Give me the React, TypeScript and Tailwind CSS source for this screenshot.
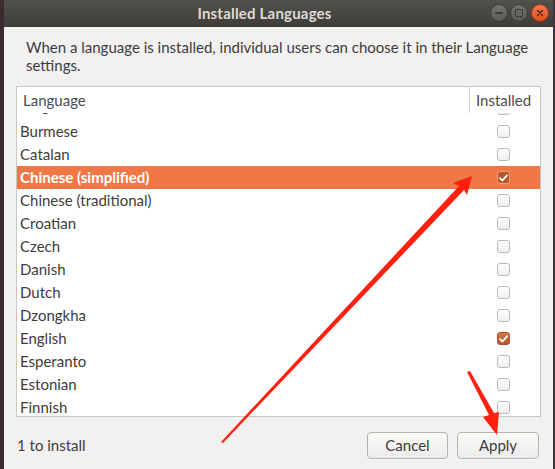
import React from "react";

const rows: { name: string; checked?: boolean; selected?: boolean }[] = [
  { name: "Bulgarian" },
  { name: "Burmese" },
  { name: "Catalan" },
  { name: "Chinese (simplified)", checked: true, selected: true },
  { name: "Chinese (traditional)" },
  { name: "Croatian" },
  { name: "Czech" },
  { name: "Danish" },
  { name: "Dutch" },
  { name: "Dzongkha" },
  { name: "English", checked: true },
  { name: "Esperanto" },
  { name: "Estonian" },
  { name: "Finnish" },
];

function Check({ checked, selected }: { checked?: boolean; selected?: boolean }) {
  if (checked) {
    return (
      <div
        className={
          "w-[13px] h-[13px] rounded-[3px] flex items-center justify-center border " +
          (selected
            ? "bg-[#b9552b] border-[#e9a081]"
            : "bg-gradient-to-b from-[#d7774c] to-[#b8552c] border-[#a9522d]")
        }
      >
        <svg width="9" height="8" viewBox="0 0 9 8">
          <path d="M1 4.2 L3.4 6.5 L8 1.3" fill="none" stroke="#ffffff" strokeWidth="1.8" strokeLinecap="round" strokeLinejoin="round" />
        </svg>
      </div>
    );
  }
  return <div className="w-[13px] h-[13px] rounded-[3px] border border-[#bcbab6] bg-gradient-to-b from-[#ffffff] to-[#f0efed]" />;
}

export default function App() {
  return (
    <div className="relative w-[555px] h-[469px] flex overflow-hidden bg-[#3b2a30]" style={{ fontFamily: "Lato, 'Open Sans', sans-serif" }}>
      <div className="w-[4px] shrink-0 bg-[#3d2a30]" />
      <div className="flex-1 flex flex-col">
        {/* Title bar */}
        <div className="h-[27px] shrink-0 bg-gradient-to-b from-[#52514c] to-[#3e3d39] flex items-center relative">
          <div className="flex-1 text-center text-[15px] font-bold text-[#dfdbd2] tracking-[0.2px] pr-[28px]">Installed Languages</div>
          <div className="absolute right-[4px] top-[4px] flex gap-[1px]">
            <div className="w-[18px] h-[18px] rounded-full bg-gradient-to-b from-[#74736e] to-[#5a5954] border border-[#3a3935] flex items-center justify-center">
              <div className="w-[8px] h-[2px] bg-[#3c3b37] rounded" />
            </div>
            <div className="w-[18px] h-[18px] rounded-full bg-gradient-to-b from-[#74736e] to-[#5a5954] border border-[#3a3935] flex items-center justify-center ml-[1px]">
              <div className="w-[8px] h-[8px] border-[1.5px] border-[#3c3b37] rounded-[1px]" />
            </div>
            <div className="w-[18px] h-[18px] rounded-full bg-gradient-to-b from-[#f47a4a] to-[#e0501b] border border-[#9c3a16] flex items-center justify-center ml-[2px]">
              <svg width="8" height="8" viewBox="0 0 8 8">
                <path d="M1.5 1.5 L6.5 6.5 M6.5 1.5 L1.5 6.5" stroke="#4a1a0a" strokeWidth="1.2" strokeLinecap="round" />
              </svg>
            </div>
          </div>
        </div>
        {/* Body */}
        <div className="flex-1 bg-[#f2f1f0] flex flex-col px-[12px]">
          <div className="pt-[11px] pl-[10px] text-[15px] leading-[18px] text-[#3c3c3c]">
            When a language is installed, individual users can choose it in their Language settings.
          </div>
          <div className="mt-[12px] border border-[#c9c7c3] bg-white flex flex-col h-[331px]">
            <div className="h-[26px] shrink-0 flex text-[15px] text-[#4c4c4c] relative z-10 bg-white">
              <div className="flex-1 pl-[6px] flex items-center">Language</div>
              <div className="w-[71px] border-l border-[#d6d4d0] pl-[6px] flex items-center">Installed</div>
            </div>
            <div className="h-[303px] overflow-hidden">
              <div className="-mt-[16px]">
                {rows.map((r, i) => (
                  <div
                    key={r.name}
                    className={
                      "h-[23px] flex items-center text-[15px] " +
                      (r.selected ? "bg-[#f07746] text-white font-bold" : "text-[#3c3c3c]")
                    }
                  >
                    <div className={"flex-1 pl-[3px] " + (i === 0 ? "-translate-y-[3px]" : "")}>{r.name}</div>
                    <div className="w-[71px] flex justify-center pr-[3px]">
                      <Check checked={r.checked} selected={r.selected} />
                    </div>
                  </div>
                ))}
              </div>
            </div>
          </div>
          <div className="mt-[15px] flex items-center">
            <div className="flex-1 pl-[1px] text-[15px] text-[#3c3c3c]">1 to install</div>
            <div className="flex gap-[9px] pr-[2px]">
              <button className="w-[81px] h-[27px] rounded-[4px] border border-[#b6b3ae] bg-gradient-to-b from-[#fafaf9] to-[#edebe9] text-[15px] leading-[25px] text-[#3c3c3c] shadow-[0_1px_0_rgba(255,255,255,0.8)]">
                Cancel
              </button>
              <button className="w-[82px] h-[27px] rounded-[4px] border border-[#b6b3ae] bg-gradient-to-b from-[#fafaf9] to-[#edebe9] text-[15px] leading-[25px] text-[#3c3c3c] shadow-[0_1px_0_rgba(255,255,255,0.8)]">
                Apply
              </button>
            </div>
          </div>
        </div>
      </div>
      <div className="w-[2px] shrink-0 bg-[#3a3434]" />
      {/* Red annotation arrows */}
      <svg className="absolute left-0 top-0 pointer-events-none" width="555" height="469" viewBox="0 0 555 469">
        <polygon points="221,442 223,443 464,190 467,195 472,176 453,183 459,186" fill="#ff2010" />
        <polygon points="467,372 470,371 494,413 499,412 497,435 483,417 489,415" fill="#ff2010" />
      </svg>
    </div>
  );
}
